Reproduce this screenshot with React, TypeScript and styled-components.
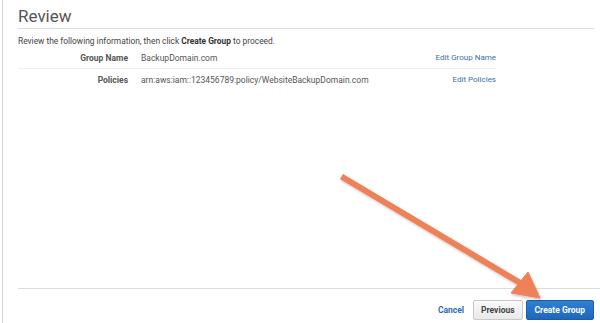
import React from 'react';
import styled, { createGlobalStyle } from 'styled-components';

const GlobalStyle = createGlobalStyle`
  html, body {
    margin: 0;
    padding: 0;
    background: #ffffff;
  }
  body {
    font-family: Roboto, "Liberation Sans", sans-serif;
  }
`;

const Page = styled.div`
  position: relative;
  width: 600px;
  height: 323px;
  overflow: hidden;
  box-sizing: border-box;
  padding-left: 2px;
`;

const Panel = styled.div`
  height: 100%;
  border-left: 1px solid #d5d5d5;
  padding-left: 15px;
  display: flex;
  flex-direction: column;
  box-sizing: border-box;
`;

const Title = styled.h1`
  margin: 0 6px 0 0;
  padding-top: 5px;
  height: 23px;
  font-size: 17px;
  font-weight: 400;
  color: #555;
  line-height: 22px;
  border-bottom: 1px solid #dcdcdc;
`;

const Intro = styled.p`
  margin: 0;
  padding-top: 6px;
  font-size: 8.4px;
  line-height: 12px;
  color: #444;

  b {
    font-weight: 700;
    color: #333;
  }
`;

const Rows = styled.div`
  width: 478px;
`;

const Row = styled.div<{ last?: boolean }>`
  display: grid;
  grid-template-columns: 110px 1fr auto;
  column-gap: 13px;
  align-items: center;
  height: 21px;
  border-bottom: ${(p) => (p.last ? 'none' : '1px solid #efefef')};
  font-size: 8.5px;
`;

const Label = styled.span`
  text-align: right;
  font-weight: 700;
  color: #555;
`;

const Value = styled.span`
  color: #555;
`;

const EditLink = styled.a`
  color: #3b6fa8;
  font-size: 8px;
  text-decoration: none;
  text-align: right;
`;

const Spacer = styled.div`
  flex: 1;
`;

const Footer = styled.div`
  border-top: 1px solid #dcdcdc;
  height: 35px;
  box-sizing: border-box;
  display: flex;
  justify-content: flex-end;
  align-items: flex-start;
  padding: 11px 6px 0 0;
  gap: 3px;
`;

const CancelLink = styled.a`
  color: #2a6cb8;
  font-size: 8.5px;
  font-weight: 700;
  line-height: 20px;
  margin-right: 6px;
  text-decoration: none;
`;

const Button = styled.button<{ primary?: boolean }>`
  font-family: Roboto, "Liberation Sans", sans-serif;
  font-size: 8.5px;
  font-weight: 700;
  height: 20px;
  padding: 0 ${(p) => (p.primary ? 8 : 7)}px;
  border-radius: 2px;
  cursor: pointer;
  color: ${(p) => (p.primary ? '#fff' : '#444')};
  background: ${(p) =>
    p.primary
      ? 'linear-gradient(#2f7fd3, #1d68bd)'
      : 'linear-gradient(#fafafa, #e9e9e9)'};
  border: 1px solid ${(p) => (p.primary ? '#1a5ea8' : '#c8c8c8')};
`;

const ArrowLayer = styled.svg`
  position: absolute;
  left: 0;
  top: 0;
  pointer-events: none;
`;

const Arrow = () => (
  <ArrowLayer width="600" height="323" viewBox="0 0 600 323">
    <defs>
      <filter id="sh" x="-10%" y="-10%" width="130%" height="130%">
        <feDropShadow dx="1" dy="1.5" stdDeviation="1" floodColor="#000" floodOpacity="0.25" />
      </filter>
    </defs>
    <g filter="url(#sh)" fill="#ee8159" stroke="#ee8159">
      <line x1="344" y1="178" x2="522" y2="284" strokeWidth="6" strokeLinecap="square" />
      <polygon points="540,298 511,293 528,272" strokeWidth="1" strokeLinejoin="round" />
    </g>
  </ArrowLayer>
);

export default function App() {
  return (
    <Page>
      <GlobalStyle />
      <Panel>
        <Title>Review</Title>
        <Intro>
          Review the following information, then click <b>Create Group</b> to proceed.
        </Intro>
        <Rows>
          <Row>
            <Label>Group Name</Label>
            <Value>BackupDomain.com</Value>
            <EditLink href="#">Edit Group Name</EditLink>
          </Row>
          <Row last>
            <Label>Policies</Label>
            <Value>arn:aws:iam::123456789:policy/WebsiteBackupDomain.com</Value>
            <EditLink href="#">Edit Policies</EditLink>
          </Row>
        </Rows>
        <Spacer />
        <Footer>
          <CancelLink href="#">Cancel</CancelLink>
          <Button>Previous</Button>
          <Button primary>Create Group</Button>
        </Footer>
      </Panel>
      <Arrow />
    </Page>
  );
}
